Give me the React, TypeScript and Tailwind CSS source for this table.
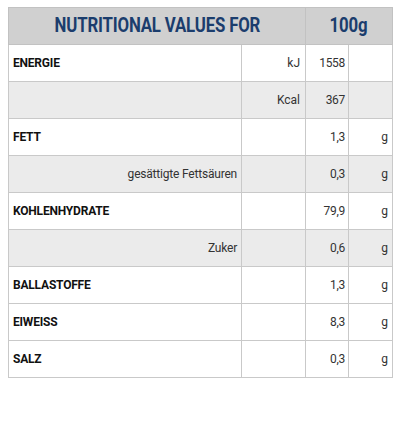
import React from "react";

type Row = { label: string; sub?: boolean; unit?: string; value: string; g?: boolean };

const rows: Row[] = [
  { label: "ENERGIE", unit: "kJ", value: "1558" },
  { label: "", sub: true, unit: "Kcal", value: "367" },
  { label: "FETT", value: "1,3", g: true },
  { label: "gesättigte Fettsäuren", sub: true, value: "0,3", g: true },
  { label: "KOHLENHYDRATE", value: "79,9", g: true },
  { label: "Zuker", sub: true, value: "0,6", g: true },
  { label: "BALLASTOFFE", value: "1,3", g: true },
  { label: "EIWEISS", value: "8,3", g: true },
  { label: "SALZ", value: "0,3", g: true },
];

export default function App() {
  return (
    <div className="w-[400px] h-[430px] bg-white pt-[7px] pl-[8px]" style={{ fontFamily: "Roboto, 'Liberation Sans', sans-serif" }}>
      <table className="table-fixed border-collapse w-[384px] border border-[#c9c9c9]">
        <colgroup>
          <col className="w-[233px]" />
          <col className="w-[64px]" />
          <col className="w-[43px]" />
          <col className="w-[44px]" />
        </colgroup>
        <thead>
          <tr className="h-[37px] bg-[#d0d0d0]">
            <th colSpan={2} className="border border-[#c2c2c2] text-center p-0 pt-[2px]">
              <span className="inline-block scale-x-[0.84] text-[20px] font-bold tracking-[-0.2px] text-[#1b3d6d] leading-none">
                NUTRITIONAL VALUES FOR
              </span>
            </th>
            <th colSpan={2} className="border border-[#c2c2c2] text-center p-0 pt-[2px]">
              <span className="inline-block scale-x-[0.84] text-[20px] font-bold tracking-[-0.2px] text-[#1b3d6d] leading-none">
                100g
              </span>
            </th>
          </tr>
        </thead>
        <tbody>
          {rows.map((r, i) => (
            <tr key={i} className={r.sub ? "h-[37px] bg-[#ebebeb]" : "h-[37px] bg-white"}>
              <td
                className={
                  r.sub
                    ? "border border-[#c9c9c9] text-right pr-[4px] text-[12px] text-[#333] tracking-[-0.2px]"
                    : "border border-[#c9c9c9] text-left pl-[4px] text-[12px] font-bold text-[#111] tracking-[-0.2px]"
                }
              >
                {r.label}
              </td>
              <td className="border border-[#c9c9c9] text-right pr-[5px] text-[12px] text-[#333]">{r.unit ?? ""}</td>
              <td className="border border-[#c9c9c9] text-right pr-[3px] text-[12px] text-[#333] tracking-[-0.3px]">{r.value}</td>
              <td className="border border-[#c9c9c9] text-right pr-[4px] text-[12px] text-[#333]">{r.g ? "g" : ""}</td>
            </tr>
          ))}
        </tbody>
      </table>
    </div>
  );
}
